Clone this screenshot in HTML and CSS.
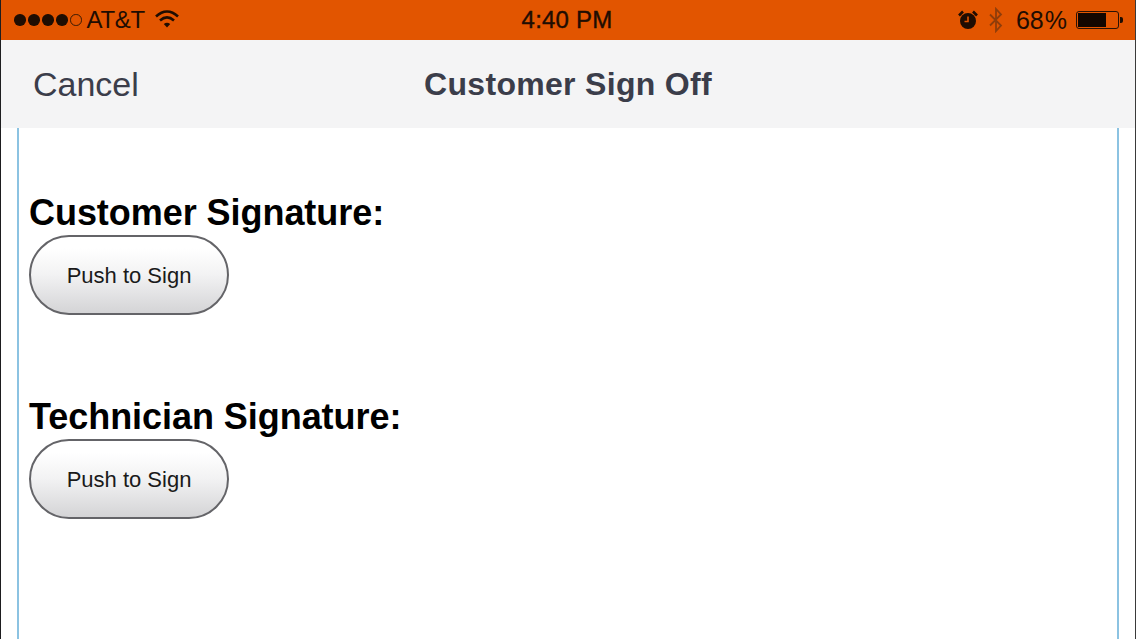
FILE: index.html
```html
<!DOCTYPE html>
<html lang="en">
<head>
<meta charset="utf-8">
<title>Customer Sign Off</title>
<link rel="stylesheet" href="styles.css">
</head>
<body>
<div class="screen">
  <header class="status">
    <div class="status-left">
      <span class="signal"><i></i><i></i><i></i><i></i><i class="empty"></i></span>
      <span class="carrier">AT&amp;T</span>
      <svg class="wifi" width="26" height="20" viewBox="0 0 26 20"><path d="M2 7.500C9 1 17 1 24 7.500" fill="none" stroke="#1f0d02" stroke-width="2.600"/><path d="M6 11.500C10.500 7.500 15.500 7.500 20 11.500" fill="none" stroke="#1f0d02" stroke-width="2.600"/><path d="M9.800 15C12 13.200 14 13.200 16.200 15L13 18.500Z" fill="#1f0d02"/></svg>
    </div>
    <div class="status-time">4:40 PM</div>
    <div class="status-right">
      <svg class="alarm" width="22" height="22" viewBox="0 0 22 22"><circle cx="11" cy="12" r="8" fill="#1f0d02"/><path d="M11 7.500V12.500H7.500" fill="none" stroke="#e25500" stroke-width="1.600"/><path d="M2 6.500L6 2.500M20 6.500L16 2.500" stroke="#1f0d02" stroke-width="2.600"/></svg>
      <svg class="bt" width="18" height="26" viewBox="0 0 18 26"><path d="M3 7.500L14 18.500L9 24V2L14 7.500L3 18.500" fill="none" stroke="#8f3d0a" stroke-width="1.800"/></svg>
      <span class="percent">68<span class="pct">%</span></span>
      <span class="battery"><span class="battery-fill"></span></span><span class="battery-tip"></span>
    </div>
  </header>
  <nav class="navbar">
    <span class="cancel">Cancel</span>
    <h1 class="title">Customer Sign Off</h1>
    <span></span>
  </nav>
  <main class="content">
    <section class="sig first">
      <h2>Customer Signature:</h2>
      <button class="sign">Push to Sign</button>
    </section>
    <section class="sig">
      <h2>Technician Signature:</h2>
      <button class="sign">Push to Sign</button>
    </section>
  </main>
</div>
</body>
</html>
```
FILE: styles.css
```css
* { box-sizing: border-box; }
html, body { margin: 0; padding: 0; background: #fff; }
body { font-family: "Liberation Sans", Arial, sans-serif; overflow: hidden; }
.screen {
  width: 1136px; height: 639px; display: flex; flex-direction: column;
  border-left: 1px solid #1d1d1f; border-right: 1px solid #3a3a3a;
}
.status {
  height: 40px; flex: none; background: #e25500; color: #1f0d02;
  display: grid; grid-template-columns: 1fr auto 1fr; align-items: center;
  font-size: 25px; padding: 0 12px 0 13px;
}
.status-left, .status-right { display: flex; align-items: center; }
.status-right { justify-content: flex-end; }
.signal { display: flex; gap: 2.500px; margin-right: 5px; }
.signal i { width: 11.500px; height: 11.500px; border-radius: 50%; background: #1f0d02; display: block; }
.signal i.empty { background: none; border: 1px solid #3a1a05; }
.carrier { margin-right: 9px; font-size: 24px; letter-spacing: -0.300px; }
.wifi { margin-top: -3px; }
.status-time { font-size: 24px; letter-spacing: 0.200px; -webkit-text-stroke: 0.400px #1f0d02; margin-left: -3px; }
.alarm { margin-right: 8px; }
.bt { margin-right: 11px; }
.percent { margin-right: 9px; }
.pct { margin-left: 1px; }
.battery {
  width: 43px; height: 18px; border: 1.500px solid #2a1205; border-radius: 3px; padding: 1px; display: flex;
}
.battery-fill { width: 28px; background: #120600; display: block; }
.battery-tip { width: 3px; height: 6px; background: #1f0d02; border-radius: 0 2px 2px 0; margin-left: 1px; }
.navbar {
  height: 88px; flex: none; background: #f4f4f5;
  display: grid; grid-template-columns: 1fr auto 1fr; align-items: center;
  padding: 0 32px; color: #3b3d4a;
}
.cancel { font-size: 34px; }
.title { margin: 0; font-size: 32px; font-weight: bold; letter-spacing: 0.300px; }
.content {
  flex: 1; margin: 0 16px; border-left: 2px solid #8cc3e2; border-right: 2px solid #8cc3e2;
  padding: 0 0 0 10px; color: #000;
}
.sig { display: flex; flex-direction: column; align-items: flex-start; margin-top: 80px; }
.sig.first { margin-top: 63px; }
.sig h2 { margin: 0; font-size: 36px; line-height: 44px; font-weight: bold; letter-spacing: -0.050px; }
.sign {
  width: 200px; height: 80px; border: 2px solid #646468; border-radius: 40px;
  background: linear-gradient(#ffffff 15%, #f2f2f3 50%, #d4d4d6); color: #1a1a1a;
  font: 22px "Liberation Sans", Arial, sans-serif; padding: 2px 0 0;
}
```
